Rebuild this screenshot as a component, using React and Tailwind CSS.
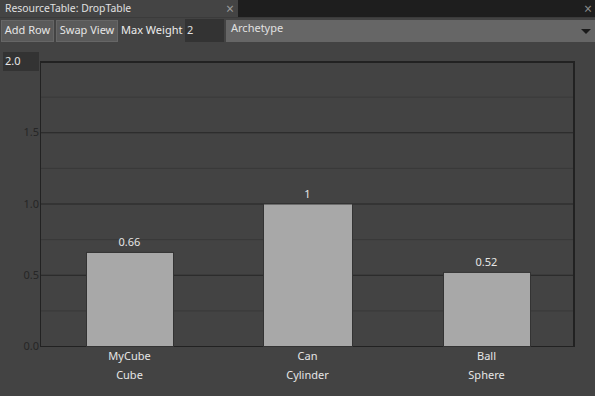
const bars = [
  { name: 'MyCube', type: 'Cube', value: 0.66, x: 86, w: 87 },
  { name: 'Can', type: 'Cylinder', value: 1, x: 263, w: 89 },
  { name: 'Ball', type: 'Sphere', value: 0.52, x: 443, w: 87 },
];

// chart coords are relative to the svg (top at page y=43)
const top = 18;
const bottom = 303;
const left = 40;
const right = 575;
const yOf = (v) => bottom - (v / 2) * (bottom - top);

const Chart = () => (
  <svg width="595" height="353" className="block" style={{ fontFamily: '"Noto Sans", sans-serif' }}>
    {[0.25, 0.75, 1.25, 1.75].map((v) => (
      <line key={v} x1={left} x2={right} y1={yOf(v) + 0.5} y2={yOf(v) + 0.5} stroke="#383838" />
    ))}
    {[0.5, 1, 1.5].map((v) => (
      <line key={v} x1={left} x2={right} y1={yOf(v) + 0.5} y2={yOf(v) + 0.5} stroke="#262626" />
    ))}
    <line x1={left} x2={right} y1={top + 1} y2={top + 1} stroke="#222" strokeWidth="2" />
    <line x1={right - 1} x2={right - 1} y1={top} y2={bottom + 1} stroke="#222" strokeWidth="2" />
    <line x1={left + 0.5} x2={left + 0.5} y1={top} y2={bottom + 1} stroke="#222" />
    <line x1={left} x2={right} y1={bottom + 0.5} y2={bottom + 0.5} stroke="#222" />

    {['1.5', '1.0', '0.5', '0.0'].map((t) => (
      <text key={t} x="39" y={yOf(parseFloat(t)) + 4} textAnchor="end" fontSize="11" fill="#262626">
        {t}
      </text>
    ))}

    {bars.map((b) => {
      const y = yOf(b.value);
      const cx = b.x + b.w / 2;
      return (
        <g key={b.name}>
          <rect x={b.x + 0.5} y={y + 0.5} width={b.w} height={bottom - y} fill="#a8a8a8" stroke="#333" />
          <text x={cx} y={y - 6} textAnchor="middle" fontSize="11" fill="#e6e6e6">
            {b.value}
          </text>
          <text x={cx} y="317" textAnchor="middle" fontSize="11" fill="#e6e6e6">
            {b.name}
          </text>
          <text x={cx} y="336" textAnchor="middle" fontSize="11" fill="#e6e6e6">
            {b.type}
          </text>
        </g>
      );
    })}

    <rect x="3" y="9" width="36" height="19" fill="#333" />
    <text x="5" y="22" fontSize="11" fill="#e6e6e6">2.0</text>
  </svg>
);

const App = () => {
  return (
    <div className="w-[595px] h-[396px] bg-[#434343] text-[#e0e0e0] overflow-hidden" style={{ fontFamily: '"Noto Sans", sans-serif' }}>
      <div className="h-[17px] bg-[#1e1e1e] flex">
        <div className="w-[238px] bg-[#444] flex items-center justify-between pl-[5px] pr-[4px] text-[10.4px]">
          <span>ResourceTable: DropTable</span>
          <span className="text-[#9a9a9a] text-[14px] leading-none">×</span>
        </div>
        <div className="flex-1 flex items-center justify-end pr-[3px]">
          <span className="text-[#8a8a8a] text-[14px] leading-none">×</span>
        </div>
      </div>

      <div className="h-[26px] flex items-center text-[11px] border-t border-[#3b3b3b]">
        <button className="ml-[1px] h-[22px] w-[53px] bg-[#5a5a5a] border border-[#666] text-[#e6e6e6]">Add Row</button>
        <button className="ml-[2px] h-[22px] w-[62px] bg-[#5a5a5a] border border-[#666] text-[#e6e6e6]">Swap View</button>
        <span className="ml-[3px] w-[64px] text-[#ececec]">Max Weight</span>
        <div className="h-[23px] w-[39px] bg-[#333] flex items-center pl-[2px] self-end mb-[1px]">2</div>
        <div className="ml-[2px] flex-1 h-[22px] bg-[#666] flex items-start justify-between pl-[5px] pr-[4px] self-end mb-[1px]">
          <span className="leading-[16px]">Archetype</span>
          <span className="self-center w-0 h-0 border-l-[5px] border-r-[5px] border-t-[5px] border-l-transparent border-r-transparent border-t-[#1a1a1a]" />
        </div>
      </div>

      <Chart />
    </div>
  );
};

export default App;
